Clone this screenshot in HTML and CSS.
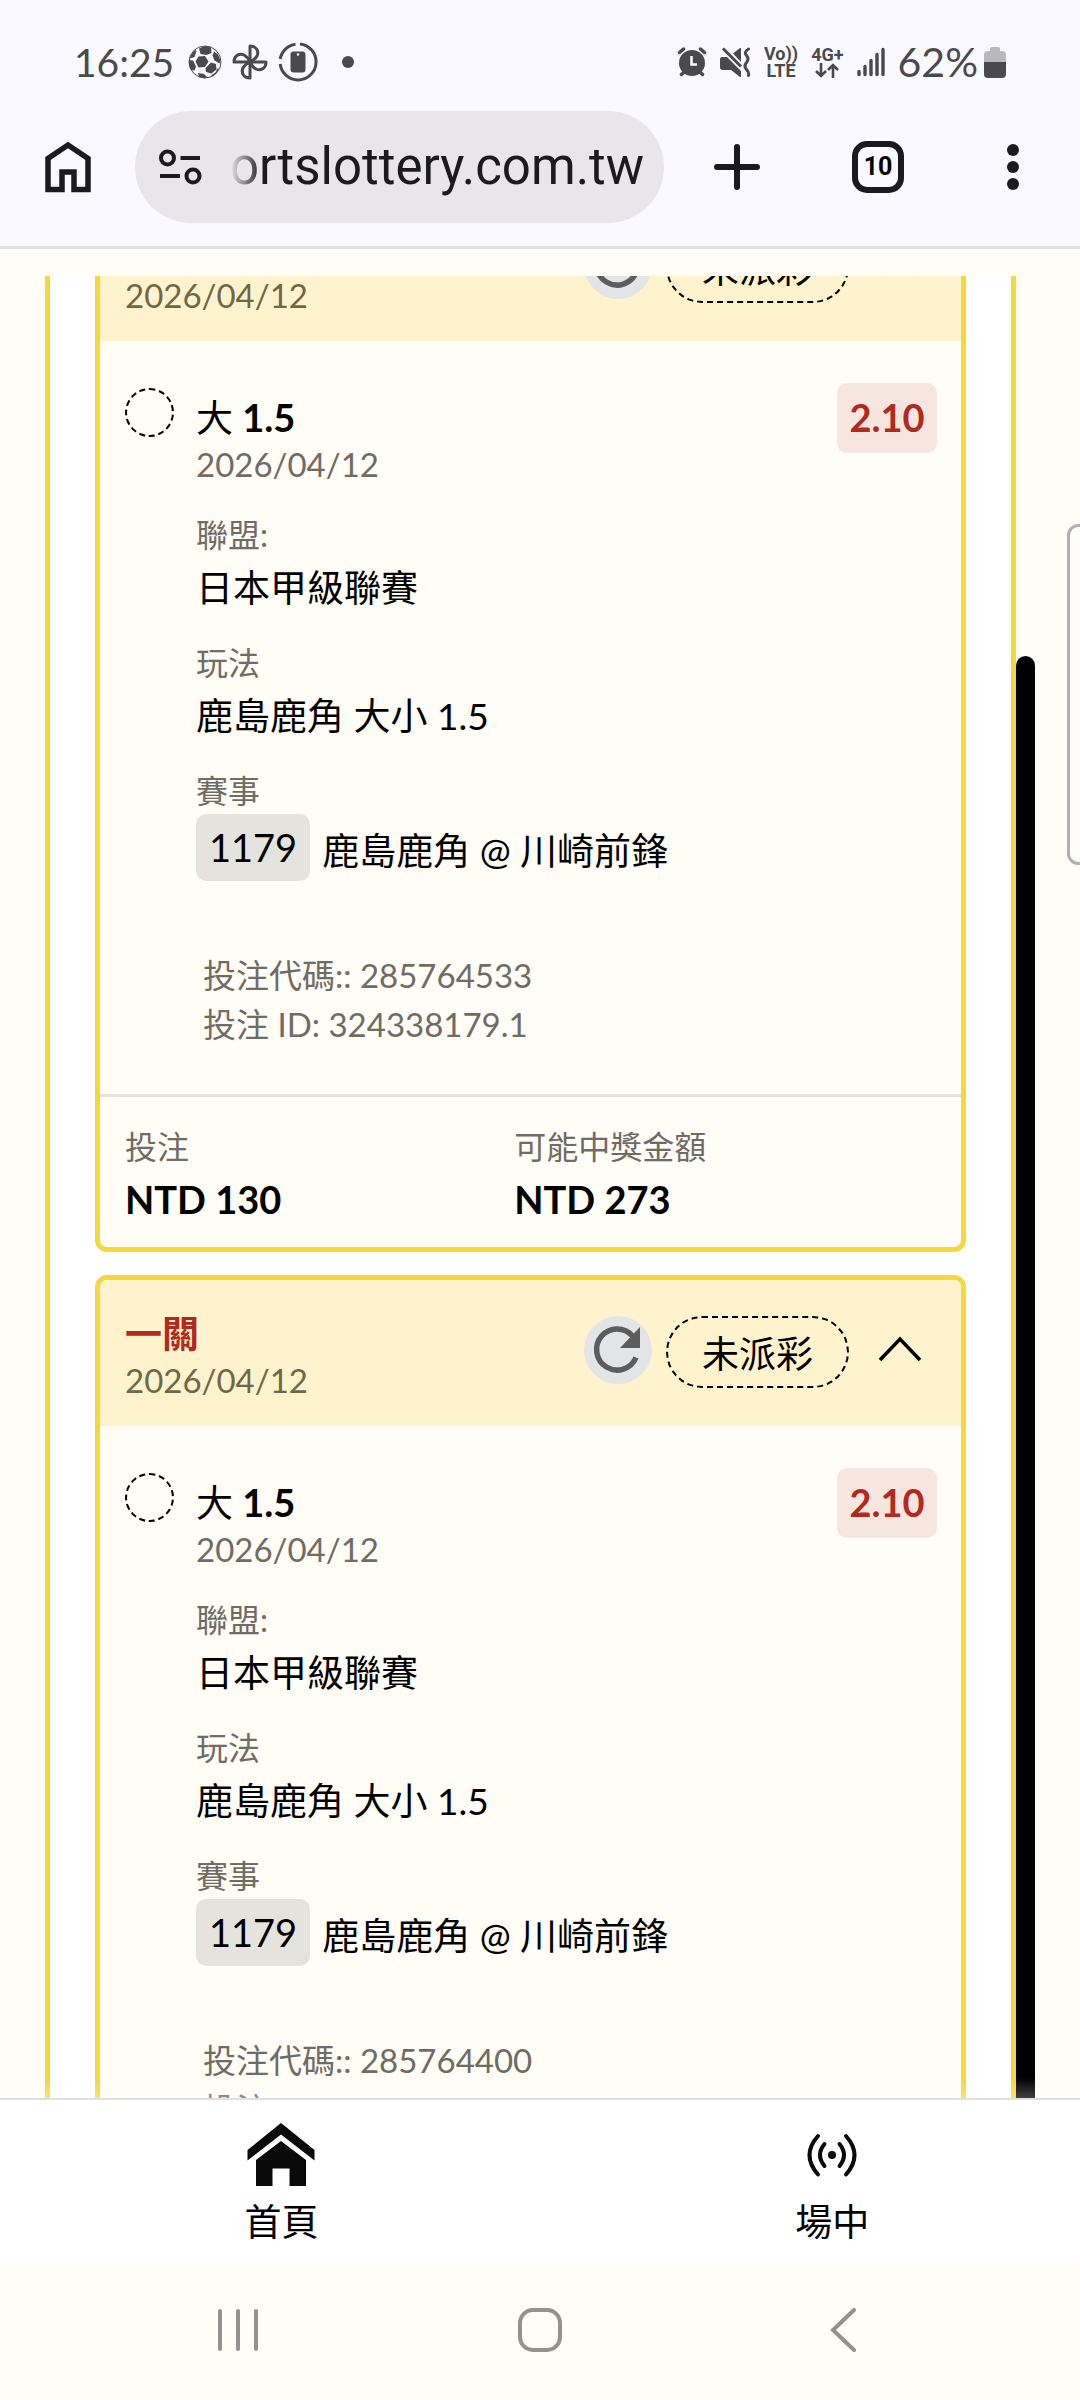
FILE: index.html
```html
<!DOCTYPE html>
<html lang="zh-Hant">
<head>
<meta charset="utf-8">
<meta name="viewport" content="width=device-width, initial-scale=1">
<title>投注紀錄</title>
<link rel="stylesheet" href="styles.css">
</head>
<body>
<svg class="sprite" aria-hidden="true">
  <symbol id="refresh" viewBox="0 0 68 68">
    <path d="M52 41.500A20.500 20.500 0 1 1 48.500 20" fill="none" stroke="#5c5c5c" stroke-width="5.500"/>
    <path d="M56 11v21H36z" fill="#5c5c5c"/>
  </symbol>
  <symbol id="chevron" viewBox="0 0 48 36">
    <path d="M4 26 24 5l20 21" fill="none" stroke="#000" stroke-width="3.500"/>
  </symbol>
</svg>

<header class="browser">
  <div class="status">
    <div class="status-group">
      <span class="clock">16:25</span>
      <svg class="st-ball" viewBox="0 0 34 34" width="34" height="34">
        <circle cx="17" cy="17" r="16" fill="#f9f9fe" stroke="#4a4a4c" stroke-width="1"/>
        <g fill="#4a4a4c">
          <path d="M10.500 11.500 17 11l3.500 5.500-3.500 5.500-6.500.5-3-6z"/>
          <path d="M11 3.500 17 1l6 1.500.5 5.500-5 2-6-1z"/>
          <path d="M26 6.500l4 3 2.500 6-1 3-5-3-2-5z"/>
          <path d="M23 17.500l5 1.500.5 5.500-5 4-5.500-1.500-.5-4z"/>
          <path d="M1 15l4 .5 3 6-1.500 4L3 25l-2-5z"/>
          <path d="M3 10l4-5 1.500 1L6.500 12 2 13.500z"/>
          <path d="M10 28l6 1 3 3-2 1.500-6-1.500z"/>
          <path d="M28 27l1-3 2-1-2 4.500-4 4-2-1z"/>
        </g>
      </svg>
      <svg class="st-fan" viewBox="0 0 36 36" width="36" height="36" fill="none" stroke="#4a4a4c" stroke-width="3" stroke-linejoin="round">
        <path d="M18 18V2c7 0 9 6 7 10-1 2-3 4-7 6"/>
        <path d="M18 18h16c0 7-6 9-10 7-2-1-4-3-6-7"/>
        <path d="M18 18v16c-7 0-9-6-7-10 1-2 3-4 7-6"/>
        <path d="M18 18H2c0-7 6-9 10-7 2 1 4 3 6 7"/>
      </svg>
      <svg class="st-phone" viewBox="0 0 40 40" width="40" height="40">
        <path d="M22 2a18 18 0 1 1-19.800 20M2.200 17A18 18 0 0 1 17.500 2.200" fill="none" stroke="#4a4a4c" stroke-width="3"/>
        <rect x="12.500" y="9.500" width="15" height="21" rx="3" fill="#4a4a4c"/>
        <circle cx="20" cy="12.500" r="1.200" fill="#f9f9fe"/>
      </svg>
      <svg class="st-dot" viewBox="0 0 12 12" width="12" height="12"><circle cx="6" cy="6" r="6" fill="#4a4a4c"/></svg>
    </div>
    <div class="status-group">
      <svg viewBox="0 0 30 30" width="30" height="30" fill="none" stroke="#4a4a4c" stroke-width="3.500" stroke-linecap="round">
        <circle cx="15" cy="16" r="13" fill="#4a4a4c" stroke="none"/>
        <path d="M2.500 5.500l4-3.500M27.500 5.500l-4-3.500M4.500 27.500l3-3M25.500 27.500l-3-3"/>
        <path d="M14.500 9v8.500h5.500" stroke="#f9f9fe" stroke-width="2.600" stroke-linecap="butt"/>
      </svg>
      <svg viewBox="0 0 31 30" width="31" height="30">
        <path d="M0 12q0-2 2-2h5L21 24v6h-1l-9-7H3q-3 0-3-3z" fill="#4a4a4c"/>
        <path d="M13 6.500 20 1h1v14z" fill="#4a4a4c"/>
        <path d="M3 1.500 21 19.500" stroke="#4a4a4c" stroke-width="3"/>
        <path d="M28.500 2q-5 3-2 6.500t0 7 0 7 2 6" fill="none" stroke="#4a4a4c" stroke-width="3" stroke-linecap="round"/>
      </svg>
      <span class="net"><span>Vo))</span><span>LTE</span></span>
      <span class="net"><span>4G+</span>
        <svg viewBox="0 0 24 15" width="24" height="15" fill="none" stroke="#4a4a4c" stroke-width="2.600"><path d="M6 0v13M1 8l5 5 5-5M18 15V2M13 7l5-5 5 5"/></svg>
      </span>
      <svg viewBox="0 0 28 30" width="28" height="30" stroke="#4a4a4c" stroke-width="3.400" stroke-linecap="round"><path d="M2 27.500v-3M8 27.500v-8M14 27.500v-14M20 27.500v-20M26 27.500v-25"/></svg>
      <span class="percent">62%</span>
      <svg viewBox="0 0 22 31" width="22" height="31"><path d="M6 2q0-2 2-2h6q2 0 2 2v2h2q4 0 4 4v8H0V8q0-4 4-4h2z" fill="#b9b9bd"/><path d="M0 15h22v12q0 4-4 4H4q-4 0-4-4z" fill="#4a4a4c"/></svg>
    </div>
  </div>
  <div class="toolbar">
    <button class="tool home" aria-label="首頁">
      <svg viewBox="0 0 46 52" width="46" height="52" fill="none" stroke="#1b1b1f" stroke-width="5.500"><path d="M3 48.500V17.500L23 4l20 13.500v31H29V31H17v17.500z"/></svg>
    </button>
    <div class="omnibox">
      <svg viewBox="0 0 44 38" width="44" height="38" fill="none" stroke="#1b1b1f" stroke-width="4"><circle cx="8.500" cy="10" r="6.500"/><path d="M21.500 10H41M1 28h20"/><circle cx="34" cy="28" r="6.500"/></svg>
      <input class="url" type="text" value="ortslottery.com.tw" aria-label="網址" readonly>
    </div>
    <button class="tool new-tab" aria-label="新分頁">
      <svg viewBox="0 0 46 46" width="46" height="46" stroke="#1b1b1f" stroke-width="6" stroke-linecap="round"><path d="M23 3v40M3 23h40"/></svg>
    </button>
    <button class="tool tabs" aria-label="分頁"><span class="tab-count">10</span></button>
    <button class="tool more" aria-label="更多">
      <svg viewBox="0 0 12 48" width="12" height="48" fill="#1b1b1f"><circle cx="6" cy="7" r="6"/><circle cx="6" cy="24" r="6"/><circle cx="6" cy="41" r="6"/></svg>
    </button>
  </div>
</header>

<main class="history">
  <div class="panel">
    <article class="bet">
      <header class="bet-head">
        <div><h2 class="bet-type">一關</h2><p class="date">2026/04/12</p></div>
        <div class="bet-controls">
          <button class="refresh" aria-label="重新整理"><svg width="68" height="68"><use href="#refresh"/></svg></button>
          <span class="state">未派彩</span>
          <button class="toggle" aria-label="收合"><svg width="48" height="36"><use href="#chevron"/></svg></button>
        </div>
      </header>
      <div class="bet-body">
        <span class="mark"></span>
        <div class="pick">
          <h3 class="pick-name"><span class="pick-side">大</span> 1.5</h3>
          <p class="date">2026/04/12</p>
          <dl class="facts">
            <div><dt>聯盟:</dt><dd>日本甲級聯賽</dd></div>
            <div><dt>玩法</dt><dd>鹿島鹿角 大小 1.5</dd></div>
            <div><dt>賽事</dt><dd class="match"><span class="code">1179</span><span>鹿島鹿角 @ 川崎前鋒</span></dd></div>
          </dl>
          <div class="ids"><p>投注代碼:: 285764533</p><p>投注 ID: 324338179.1</p></div>
        </div>
        <span class="odds">2.10</span>
      </div>
      <dl class="totals">
        <div><dt>投注</dt><dd>NTD 130</dd></div>
        <div><dt>可能中獎金額</dt><dd>NTD 273</dd></div>
      </dl>
    </article>

    <article class="bet">
      <header class="bet-head">
        <div><h2 class="bet-type">一關</h2><p class="date">2026/04/12</p></div>
        <div class="bet-controls">
          <button class="refresh" aria-label="重新整理"><svg width="68" height="68"><use href="#refresh"/></svg></button>
          <span class="state">未派彩</span>
          <button class="toggle" aria-label="收合"><svg width="48" height="36"><use href="#chevron"/></svg></button>
        </div>
      </header>
      <div class="bet-body">
        <span class="mark"></span>
        <div class="pick">
          <h3 class="pick-name"><span class="pick-side">大</span> 1.5</h3>
          <p class="date">2026/04/12</p>
          <dl class="facts">
            <div><dt>聯盟:</dt><dd>日本甲級聯賽</dd></div>
            <div><dt>玩法</dt><dd>鹿島鹿角 大小 1.5</dd></div>
            <div><dt>賽事</dt><dd class="match"><span class="code">1179</span><span>鹿島鹿角 @ 川崎前鋒</span></dd></div>
          </dl>
          <div class="ids"><p>投注代碼:: 285764400</p><p>投注 ID: 324338098.1</p></div>
        </div>
        <span class="odds">2.10</span>
      </div>
    </article>
  </div>
  <div class="scroll-track"><div class="scroll-thumb"></div></div>
  <div class="edge-handle"></div>
</main>

<nav class="site-nav">
  <a class="nav-item" href="#home">
    <svg viewBox="0 0 68 68" width="68" height="68" fill="#0a0a0a"><path d="M34 3 67.500 30v10.500L34 14.500.5 40.500V30z"/><path d="M34 21 59 40v26H42.500V48.500h-17V66H9V40z"/></svg>
    <span>首頁</span>
  </a>
  <a class="nav-item" href="#live">
    <svg viewBox="0 0 68 68" width="68" height="68" fill="none" stroke="#0a0a0a" stroke-width="4" stroke-linecap="round"><circle cx="34" cy="35" r="4" fill="#0a0a0a" stroke="none"/><path d="M26.500 24q-9 11 0 22M41.500 24q9 11 0 22M20 16q-17 19 0 38.500M48 16q17 19 0 38.500"/></svg>
    <span>場中</span>
  </a>
</nav>

<footer class="system-nav">
  <button aria-label="最近使用"><svg viewBox="0 0 44 44" width="44" height="44" stroke="#92928e" stroke-width="4" stroke-linecap="round"><path d="M4 3v38M22 3v38M40 3v38"/></svg></button>
  <button aria-label="主畫面"><svg viewBox="0 0 44 44" width="44" height="44" fill="none" stroke="#92928e" stroke-width="4"><rect x="2" y="2" width="40" height="40" rx="13"/></svg></button>
  <button aria-label="返回"><svg viewBox="0 0 44 44" width="44" height="44" fill="none" stroke="#92928e" stroke-width="4" stroke-linecap="round"><path d="M34 2 13 22l21 20"/></svg></button>
</footer>
</body>
</html>
```
FILE: styles.css
```css
:root {
  --yellow: #f6d73c;
  --cream: #fffdf5;
  --muted: #6e6c64;
  --red: #b12a20;
  --text-s: 32px;
  --text-date: 33px;
  --text-m: 37px;
  --text-num: 38px;
}
* { box-sizing: border-box; margin: 0; padding: 0; }
body {
  display: flex;
  flex-direction: column;
  height: 100vh;
  overflow: hidden;
  background: var(--cream);
  color: #000;
  font: 400 var(--text-m)/46px Lato, "Noto Sans CJK TC", sans-serif;
}
button { border: 0; background: none; font: inherit; color: inherit; }
svg { display: block; flex: none; }
.sprite { position: absolute; width: 0; height: 0; }

/* Browser chrome */
.browser {
  flex: none;
  background: #faf9ff;
  border-bottom: 3px solid #e0e0e2;
  padding-bottom: 23px;
}
.status {
  display: flex;
  justify-content: space-between;
  align-items: center;
  height: 111px;
  padding: 13px 74px 0 74px;
  color: #4a4a4c;
  font-size: 39px;
}
.status-group { display: flex; align-items: center; }
.status-group:first-child { gap: 10px; }
.status-group:last-child { gap: 13px; }
.clock { margin-right: 4px; }
.st-dot { margin-left: 14px; }
.percent { font-size: 41px; }
.percent + svg { margin-left: -7px; }
.net {
  display: flex;
  flex-direction: column;
  align-items: center;
  font: 700 18px/17px Roboto, sans-serif;
}
.toolbar { display: flex; align-items: center; height: 112px; }
.tool {
  display: flex;
  flex: none;
  align-items: center;
  justify-content: center;
  height: 100%;
}
.home { width: 135px; }
.new-tab { width: 146px; }
.tabs { width: 136px; }
.more { width: 134px; }
.tab-count {
  width: 52px;
  height: 52px;
  border: 6px solid #1b1b1f;
  border-radius: 15px;
  font: 700 25px/40px Roboto, sans-serif;
}
.omnibox {
  display: flex;
  flex: 1;
  align-items: center;
  gap: 27px;
  min-width: 0;
  height: 100%;
  padding: 0 20px 0 24px;
  border-radius: 56px;
  background: #e8e6eb;
}
.url {
  flex: 1;
  min-width: 0;
  height: 80px;
  border: 0;
  outline: 0;
  background: none;
  color: #1b1b1f;
  font: 400 51px/80px Roboto, sans-serif;
  -webkit-mask-image: linear-gradient(90deg, transparent, #000 32px);
  mask-image: linear-gradient(90deg, transparent, #000 32px);
}

/* Bet list */
.history {
  position: relative;
  display: flex;
  flex: 1;
  min-height: 0;
  margin-top: 27px;
  padding: 0 45px;
  overflow: hidden;
}
.history::after {
  content: "";
  position: absolute;
  inset: auto 0 0;
  height: 20px;
  background: linear-gradient(transparent, rgba(255, 255, 255, .25));
}
.panel {
  flex: 1;
  min-width: 0;
  padding: 0 45px;
  border: solid var(--yellow);
  border-width: 0 5px;
  background: #fff;
}
.bet {
  margin-bottom: 23px;
  border: 5px solid var(--yellow);
  border-radius: 12px;
  background: var(--cream);
  overflow: hidden;
}
.bet:first-child { margin-top: -86px; }
.bet-head {
  display: flex;
  justify-content: space-between;
  height: 146px;
  padding: 31px 37px 22px 25px;
  background: #fff3cd;
}
.bet-type { color: var(--red); font-size: var(--text-m); font-weight: 700; }
.date { color: var(--muted); font-size: var(--text-date); }
.bet-head .date { color: #6f6848; }
.bet-controls { display: flex; align-items: center; height: 82px; }
.refresh { border-radius: 50%; background: #e2e4e6; margin: 0 14px 4px 0; }
.state {
  height: 72px;
  padding: 0 34px;
  border: 2px dashed #000;
  border-radius: 36px;
  line-height: 72px;
}
.toggle { margin-left: 27px; }
.bet-body { display: flex; align-items: flex-start; padding: 42px 24px 45px 25px; }
.mark {
  width: 49px;
  height: 49px;
  margin: 5px 22px 0 0;
  border: 2px dashed #000;
  border-radius: 50%;
}
.pick { flex: 1; padding-top: 11px; }
.pick-name { font-size: var(--text-num); font-weight: 700; }
.pick-side { font-size: var(--text-m); font-weight: 400; }
.facts { display: grid; gap: 22px; margin-top: 25px; }
.facts dt, .totals dt { color: var(--muted); font-size: var(--text-s); }
.facts dd { line-height: 60px; }
.facts .match { display: flex; align-items: flex-end; gap: 12px; }
.code {
  padding: 0 13px;
  border-radius: 10px;
  background: #e5e3dd;
  font-size: var(--text-num);
  line-height: 67px;
}
.ids {
  margin-top: 70px;
  padding-left: 7px;
  color: var(--muted);
  font-size: var(--text-date);
  line-height: 49px;
}
.odds {
  width: 100px;
  padding-bottom: 2px;
  border-radius: 10px;
  background: #f6e6df;
  color: var(--red);
  font-size: var(--text-num);
  font-weight: 700;
  line-height: 68px;
  text-align: center;
}
.totals {
  display: grid;
  grid-template-columns: 48% 1fr;
  padding: 27px 25px 19px;
  border-top: 3px solid #e5e3dd;
}
.totals dd { font-size: var(--text-num); font-weight: 700; line-height: 58px; }
.scroll-track { display: flex; width: 19px; padding-top: 380px; }
.scroll-thumb { flex: 1; border-radius: 10px 10px 0 0; background: #000; }
.edge-handle {
  position: absolute;
  top: 248px;
  right: -10px;
  width: 23px;
  height: 341px;
  border: 3px solid #b0b0ae;
  border-radius: 14px;
  background: #fffefa;
}

/* Bottom bars */
.site-nav {
  display: flex;
  flex: none;
  padding: 20px 0 7px;
  border-top: 2px solid #e0e0e0;
  background: #fff;
  overflow: hidden;
}
.nav-item {
  display: flex;
  flex: 0 0 51%;
  flex-direction: column;
  align-items: center;
  color: #000;
  line-height: 68px;
  text-decoration: none;
}
.nav-item:first-child { margin-left: 6px; }
.system-nav {
  display: flex;
  flex: none;
  justify-content: space-around;
  height: 137px;
  padding: 0 87px;
}
.system-nav button { display: flex; flex: 1; align-items: center; justify-content: center; }
.system-nav svg { margin-bottom: 4px; }
```
